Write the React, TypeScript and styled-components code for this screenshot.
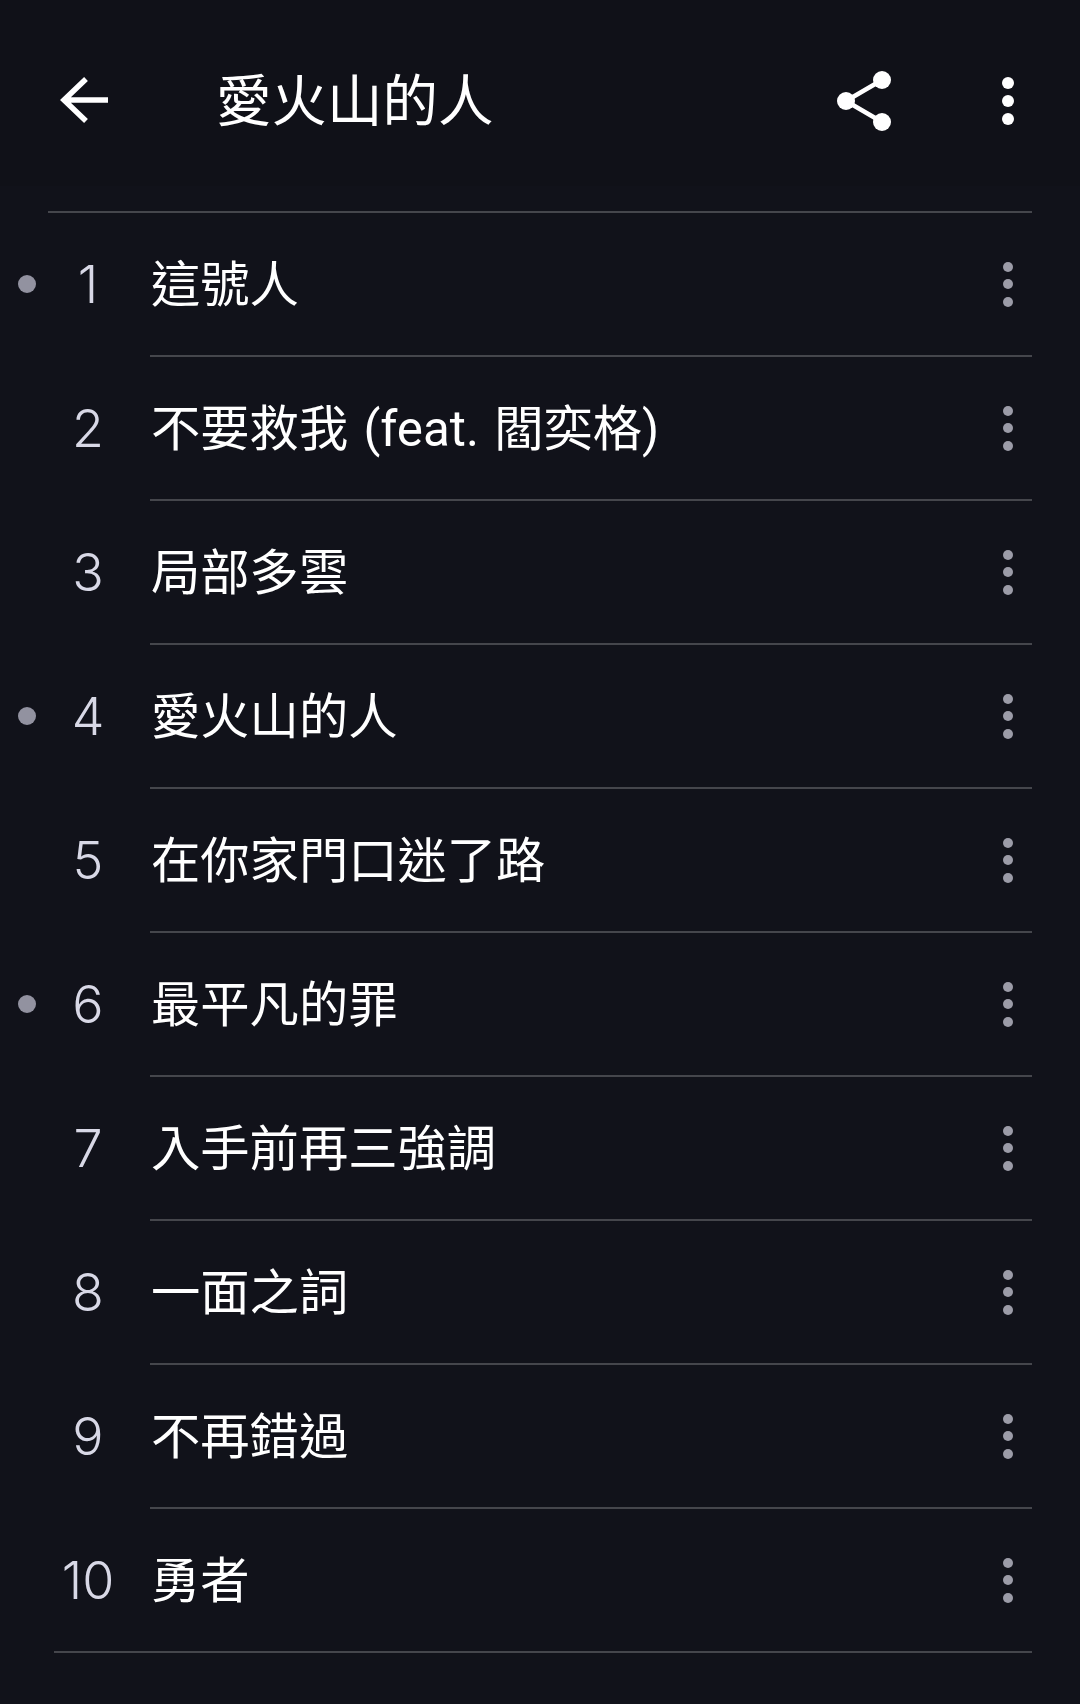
import React from 'react';
import styled, { createGlobalStyle } from 'styled-components';

const GlobalStyle = createGlobalStyle`
  html, body {
    margin: 0;
    padding: 0;
    background-color: #101118;
  }
`;

const Container = styled.div`
  width: 1080px;
  height: 1704px;
  overflow: hidden;
  background-color: #11121a;
  font-family: 'Roboto', 'Noto Sans CJK TC', sans-serif;
  color: #ffffff;
`;

const Header = styled.header`
  height: 186px;
  box-sizing: border-box;
  padding: 16px 48px 0 59px;
  display: flex;
  align-items: center;
  background-color: #101118;
`;

const BackButton = styled.svg`
  width: 52px;
  height: 52px;
  flex-shrink: 0;
`;

const HeaderTitle = styled.h1`
  flex: 1;
  margin: 0 0 0 105px;
  padding-top: 3px;
  font-size: 55.5px;
  line-height: 64px;
  font-weight: 400;
`;

const ShareIcon = styled.svg`
  width: 60px;
  height: 60px;
  margin-right: 87px;
  flex-shrink: 0;
`;

const MenuDots = styled.div<{ $strong?: boolean }>`
  width: 48px;
  display: flex;
  flex-direction: column;
  align-items: center;
  flex-shrink: 0;
  gap: ${p => (p.$strong ? '6px' : '7.5px')};

  span {
    display: block;
    width: ${p => (p.$strong ? '12px' : '10px')};
    height: ${p => (p.$strong ? '12px' : '10px')};
    border-radius: 50%;
    background-color: ${p => (p.$strong ? '#ffffff' : '#9c9ca8')};
  }
`;

const Divider = styled.div<{ $left: number }>`
  height: 2px;
  margin-left: ${p => p.$left}px;
  margin-right: 48px;
  background-color: #45464c;
`;

const TrackList = styled.main`
  padding-top: 25px;
`;

const TrackRow = styled.div`
  height: 142px;
  display: flex;
  align-items: center;
  padding-right: 48px;
`;

const DotCell = styled.div`
  width: 46px;
  padding-left: 18px;
  box-sizing: border-box;
  flex-shrink: 0;
`;

const Dot = styled.div`
  width: 18px;
  height: 18px;
  border-radius: 50%;
  background-color: #9292a0;
`;

const TrackNumber = styled.div`
  width: 84px;
  flex-shrink: 0;
  padding-top: 1px;
  text-align: center;
  font-family: 'Inter', 'Roboto', sans-serif;
  font-size: 52px;
  font-weight: 300;
  color: #d8d8e6;
`;

const TrackTitle = styled.div`
  flex: 1;
  margin-left: 21px;
  padding-top: 2px;
  font-size: 49.3px;
  line-height: 60px;
  font-weight: 400;
  word-spacing: 3px;
`;

const tracks = [
  { title: '這號人', marked: true },
  { title: '不要救我 (feat. 閻奕格)', marked: false },
  { title: '局部多雲', marked: false },
  { title: '愛火山的人', marked: true },
  { title: '在你家門口迷了路', marked: false },
  { title: '最平凡的罪', marked: true },
  { title: '入手前再三強調', marked: false },
  { title: '一面之詞', marked: false },
  { title: '不再錯過', marked: false },
  { title: '勇者', marked: false },
];

const Dots: React.FC<{ strong?: boolean }> = ({ strong }) => (
  <MenuDots $strong={strong}>
    <span />
    <span />
    <span />
  </MenuDots>
);

const App: React.FC = () => (
  <Container>
    <GlobalStyle />
    <Header>
      <BackButton viewBox="0 0 52 52">
        <path d="M49 25H6M27 4 5 25l22 21" fill="none" stroke="#fff" strokeWidth="5.5" />
      </BackButton>
      <HeaderTitle>愛火山的人</HeaderTitle>
      <ShareIcon viewBox="0 0 60 60">
        <path d="M9 30 45 9M9 30l36 21" stroke="#fff" strokeWidth="4.5" fill="none" />
        <circle cx="9" cy="30" r="9" fill="#fff" />
        <circle cx="45" cy="9" r="9" fill="#fff" />
        <circle cx="45" cy="51" r="9" fill="#fff" />
      </ShareIcon>
      <Dots strong />
    </Header>
    <TrackList>
      <Divider $left={48} />
      {tracks.map((track, i) => (
        <React.Fragment key={track.title}>
          <TrackRow>
            <DotCell>{track.marked && <Dot />}</DotCell>
            <TrackNumber>{i + 1}</TrackNumber>
            <TrackTitle>{track.title}</TrackTitle>
            <Dots />
          </TrackRow>
          <Divider $left={i === tracks.length - 1 ? 54 : 150} />
        </React.Fragment>
      ))}
    </TrackList>
  </Container>
);

export default App;
